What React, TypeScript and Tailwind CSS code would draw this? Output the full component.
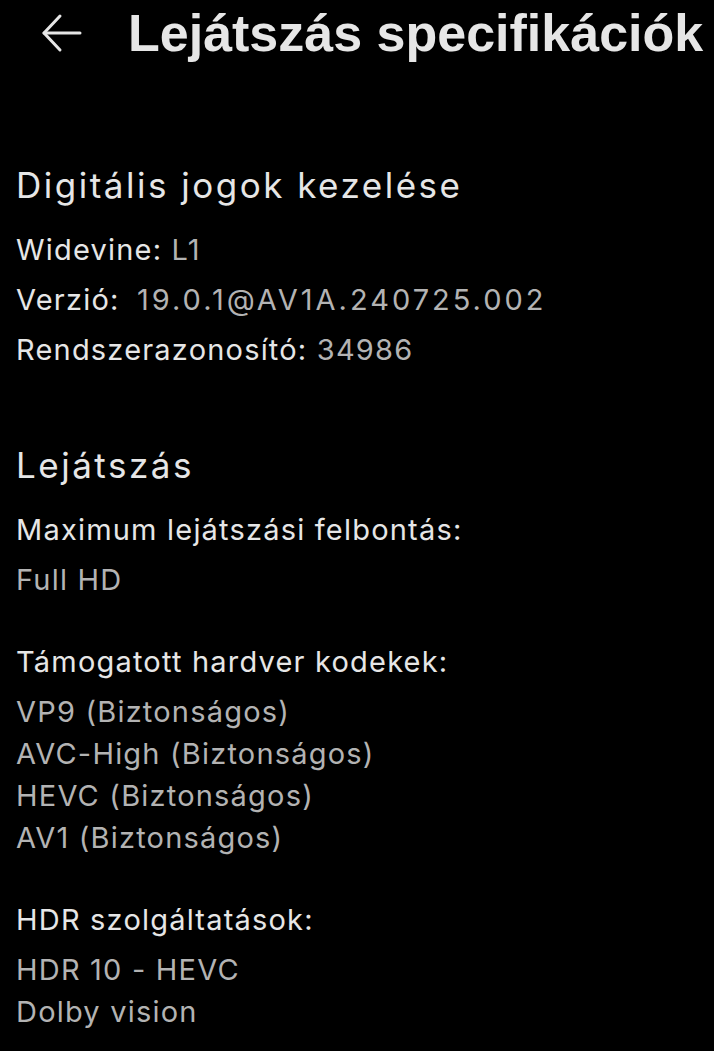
import React from 'react';

const sans = { fontFamily: 'Inter, "Noto Sans", sans-serif' };

const Group = ({ label, values }: { label: string; values: string[] }) => (
  <div>
    <p className="text-[29px] leading-[42px] tracking-[1.2px] text-[#e6e6e6]">{label}</p>
    <div className="mt-2">
      {values.map((v) => (
        <p key={v} className="text-[29px] leading-[42px] tracking-[1.2px] text-[#b3b3b3]">{v}</p>
      ))}
    </div>
  </div>
);

const App: React.FC = () => {
  return (
    <div className="min-h-[1051px] w-full bg-black overflow-hidden" style={sans}>
      {/* header */}
      <div className="h-[66px] flex items-center">
        <button className="ml-[40px] w-[42px] h-[42px] flex items-center justify-center text-[#e6e6e6]">
          <svg width="42" height="42" viewBox="0 0 42 42" fill="none" stroke="currentColor" strokeWidth="3" strokeLinecap="round" strokeLinejoin="round">
            <path d="M40 21H4" />
            <path d="M20 4L4 21l16 17" />
          </svg>
        </button>
        <h1
          className="ml-[46px] text-[52px] leading-none font-bold text-[#e6e6e6] whitespace-nowrap"
          style={{ fontFamily: '"Liberation Sans", Arial, sans-serif' }}
        >
          Lejátszás specifikációk
        </h1>
      </div>

      <div className="px-4">
        {/* DRM */}
        <section className="mt-[95px]">
          <h2 className="text-[35px] leading-[48px] tracking-[2.5px] text-[#e6e6e6]">Digitális jogok kezelése</h2>
          <div className="mt-5 flex flex-col gap-2">
            <p className="text-[29px] leading-[42px] tracking-[1.2px] text-[#e6e6e6]">
              Widevine: <span className="text-[#b3b3b3]">L1</span>
            </p>
            <p className="text-[29px] leading-[42px] tracking-[1.2px] text-[#e6e6e6]">
              Verzió: <span className="pl-2 tracking-[3px] text-[#b3b3b3]">19.0.1@AV1A.240725.002</span>
            </p>
            <p className="text-[29px] leading-[42px] tracking-[1.2px] text-[#e6e6e6]">
              Rendszerazonosító: <span className="text-[#b3b3b3]">34986</span>
            </p>
          </div>
        </section>

        {/* Playback */}
        <section className="mt-[70px]">
          <h2 className="text-[35px] leading-[48px] tracking-[2.5px] text-[#e6e6e6]">Lejátszás</h2>
          <div className="mt-5 flex flex-col gap-10">
            <Group label="Maximum lejátszási felbontás:" values={['Full HD']} />
            <Group
              label="Támogatott hardver kodekek:"
              values={['VP9 (Biztonságos)', 'AVC-High (Biztonságos)', 'HEVC (Biztonságos)', 'AV1 (Biztonságos)']}
            />
            <Group label="HDR szolgáltatások:" values={['HDR 10 - HEVC', 'Dolby vision']} />
          </div>
        </section>
      </div>
    </div>
  );
};

export default App;
